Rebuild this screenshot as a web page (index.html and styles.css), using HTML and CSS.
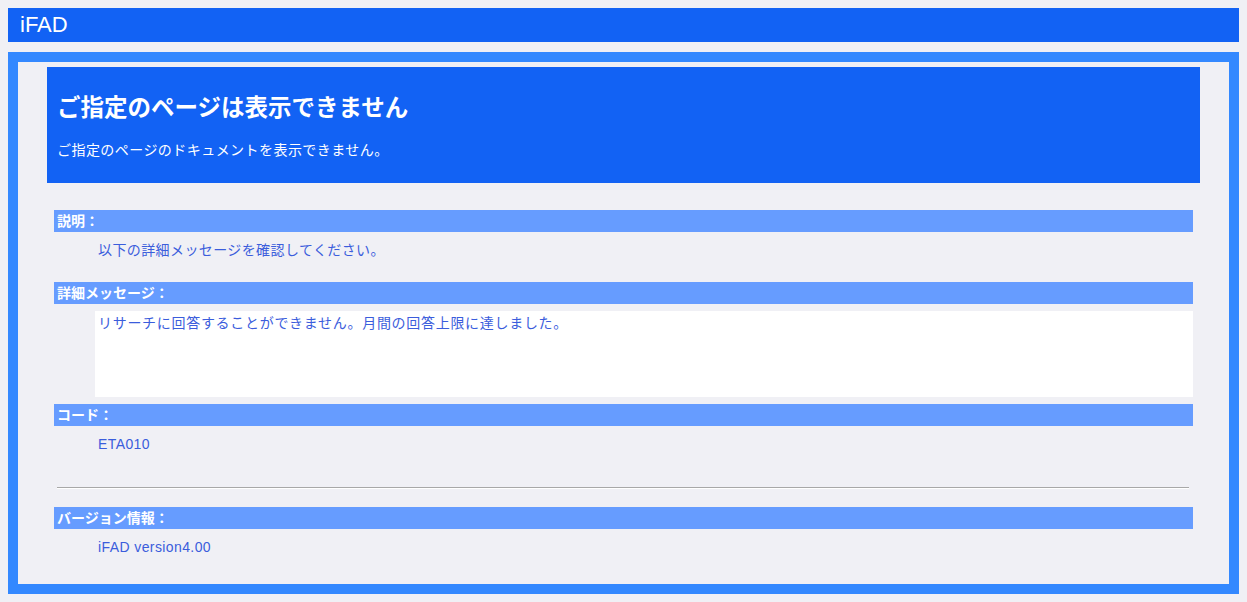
FILE: index.html
```html
<!DOCTYPE html>
<html lang="ja">
<head>
<meta charset="utf-8">
<title>iFAD</title>
<link rel="stylesheet" href="styles.css">
</head>
<body>
<div class="topbar">iFAD</div>
<div class="frame">
  <div class="panel">
    <h1 class="panel-title">ご指定のページは表示できません</h1>
    <p class="panel-sub">ご指定のページのドキュメントを表示できません。</p>
  </div>
  <div class="sections">
    <div class="sec-head">説明：</div>
    <div class="sec-body">以下の詳細メッセージを確認してください。</div>

    <div class="sec-head">詳細メッセージ：</div>
    <div class="msg-box">リサーチに回答することができません。月間の回答上限に達しました。</div>

    <div class="sec-head">コード：</div>
    <div class="sec-body code-body">ETA010</div>
  </div>
  <hr class="rule">
  <div class="sections">
    <div class="sec-head">バージョン情報：</div>
    <div class="sec-body">iFAD version4.00</div>
  </div>
</div>
</body>
</html>
```
FILE: styles.css
```css
html, body {
  margin: 0;
  padding: 0;
}
body {
  background: #f0f0f5;
  padding: 8px;
  font-family: "Liberation Sans", "Noto Sans CJK JP", sans-serif;
  font-size: 14px;
}
.topbar {
  height: 34px;
  line-height: 34px;
  background: #1262f4;
  color: #ffffff;
  font-size: 22px;
  padding-left: 12px;
  margin-bottom: 10px;
}
.frame {
  border: 10px solid #3388ff;
  height: 522px;
  box-sizing: content-box;
}
.panel {
  margin: 5px 29px 0;
  height: 116px;
  box-sizing: border-box;
  background: #1262f4;
  color: #ffffff;
  padding: 27px 10px 0;
}
.panel-title {
  margin: 0;
  font-size: 23.5px;
  line-height: 28px;
  font-weight: bold;
}
.panel-sub {
  margin: 18px 0 0;
  font-size: 14px;
  line-height: 20px;
  letter-spacing: 0.45px;
}
.sections {
  margin: 27px 36px 0;
}
.sec-head {
  height: 22px;
  line-height: 22px;
  background: #669cff;
  color: #ffffff;
  font-weight: bold;
  font-size: 14px;
  padding-left: 3px;
}
.sec-body {
  color: #3b5ddc;
  line-height: 20px;
  padding: 8px 0 22px 44px;
  letter-spacing: 0.4px;
}
.code-body {
  padding-bottom: 0;
}
.msg-box {
  margin: 7px 0 7px 41px;
  height: 86px;
  box-sizing: border-box;
  background: #ffffff;
  color: #3b5ddc;
  line-height: 20px;
  padding: 2px 3px 0;
  letter-spacing: 0.7px;
}
.rule {
  margin: 33px 40px 0 39px;
  height: 0;
  border: 0;
  border-top: 1px solid #a8a8a8;
  border-bottom: 1px solid #ffffff;
}
.rule + .sections {
  margin-top: 18px;
}
```
